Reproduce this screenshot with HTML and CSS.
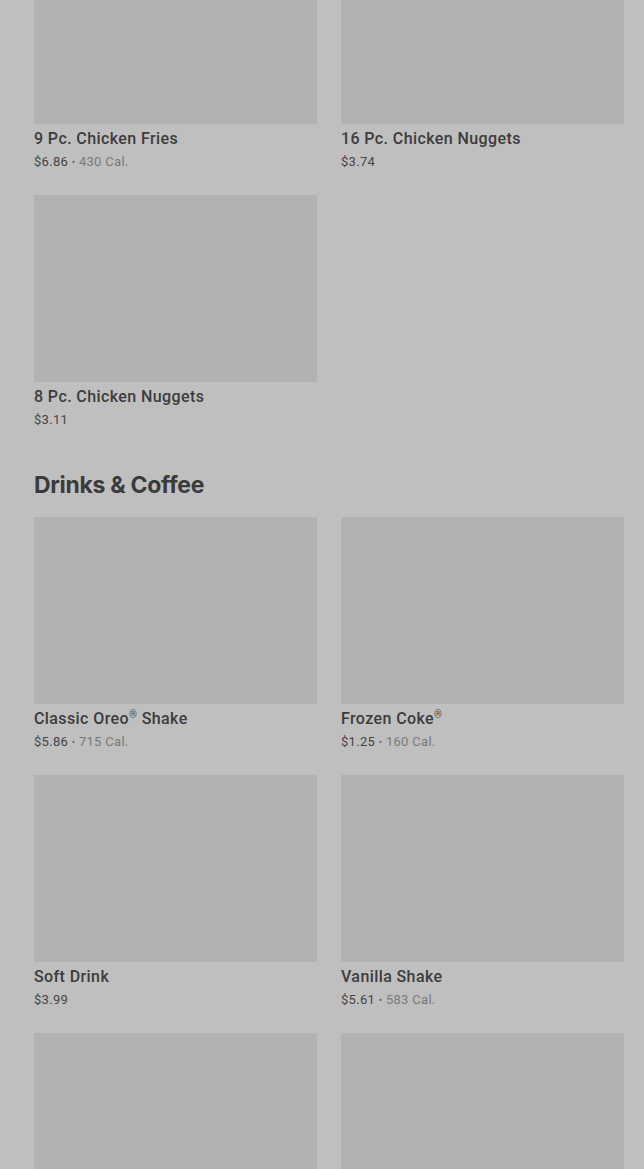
FILE: index.html
```html
<!DOCTYPE html>
<html lang="en">
<head>
    <meta charset="UTF-8" />
    <meta name="viewport" content="width=device-width, initial-scale=1.0" />
    <title>Menu</title>
    <link rel="stylesheet" href="styles.css">
</head>
<body>
    <div class="menu">
        <section class="category category-first">
            <div class="items">
                <div class="item">
                    <div class="item-image"></div>
                    <p class="item-name">9 Pc. Chicken Fries</p>
                    <p class="item-meta"><span class="price">$6.86</span> <span class="dot">&bull;</span> <span class="cal">430 Cal.</span></p>
                </div>
                <div class="item">
                    <div class="item-image"></div>
                    <p class="item-name">16 Pc. Chicken Nuggets</p>
                    <p class="item-meta"><span class="price">$3.74</span></p>
                </div>
                <div class="item">
                    <div class="item-image"></div>
                    <p class="item-name">8 Pc. Chicken Nuggets</p>
                    <p class="item-meta"><span class="price">$3.11</span></p>
                </div>
            </div>
        </section>

        <section class="category">
            <h2>Drinks &amp; Coffee</h2>
            <div class="items">
                <div class="item">
                    <div class="item-image"></div>
                    <p class="item-name">Classic Oreo<sup>&reg;</sup> Shake</p>
                    <p class="item-meta"><span class="price">$5.86</span> <span class="dot">&bull;</span> <span class="cal">715 Cal.</span></p>
                </div>
                <div class="item">
                    <div class="item-image"></div>
                    <p class="item-name">Frozen Coke<sup>&reg;</sup></p>
                    <p class="item-meta"><span class="price">$1.25</span> <span class="dot">&bull;</span> <span class="cal">160 Cal.</span></p>
                </div>
                <div class="item">
                    <div class="item-image"></div>
                    <p class="item-name">Soft Drink</p>
                    <p class="item-meta"><span class="price">$3.99</span></p>
                </div>
                <div class="item">
                    <div class="item-image"></div>
                    <p class="item-name">Vanilla Shake</p>
                    <p class="item-meta"><span class="price">$5.61</span> <span class="dot">&bull;</span> <span class="cal">583 Cal.</span></p>
                </div>
                <div class="item">
                    <div class="item-image"></div>
                </div>
                <div class="item">
                    <div class="item-image"></div>
                </div>
            </div>
        </section>
    </div>
</body>
</html>
```

FILE: styles.css
```css
* {
    margin: 0;
    padding: 0;
    box-sizing: border-box;
}

body {
    background: #bfbfbf;
    font-family: 'Roboto', 'Inter', sans-serif;
    color: #3a3a3a;
    overflow: hidden;
}

.menu {
    padding: 0 20px 0 34px;
    margin-top: -63px;
}

.category {
    margin-top: 40px;
}

.category-first {
    margin-top: 0;
}

.category h2 {
    font-family: 'Inter', sans-serif;
    font-size: 23px;
    line-height: 32px;
    font-weight: 700;
    letter-spacing: -0.3px;
    color: #3b3b3b;
    margin-bottom: 16px;
}

.items {
    display: grid;
    grid-template-columns: 1fr 1fr;
    column-gap: 24px;
    row-gap: 24px;
}

.item-image {
    height: 187px;
    background: #b2b2b2;
}

.item-name {
    margin-top: 5px;
    font-size: 16px;
    line-height: 20px;
    font-weight: 500;
    letter-spacing: 0.4px;
    color: #3c3c3c;
}

.item-name sup {
    font-size: 10px;
    line-height: 0;
    vertical-align: 6px;
    color: #4a4a4a;
}

.item-meta {
    margin-top: 4px;
    font-size: 13px;
    line-height: 18px;
    letter-spacing: 0.3px;
    color: #454545;
}

.item-meta .dot {
    font-size: 10px;
    line-height: 0;
    color: #6c6c6c;
}

.item-meta .cal {
    color: #7a7a7a;
}
```
